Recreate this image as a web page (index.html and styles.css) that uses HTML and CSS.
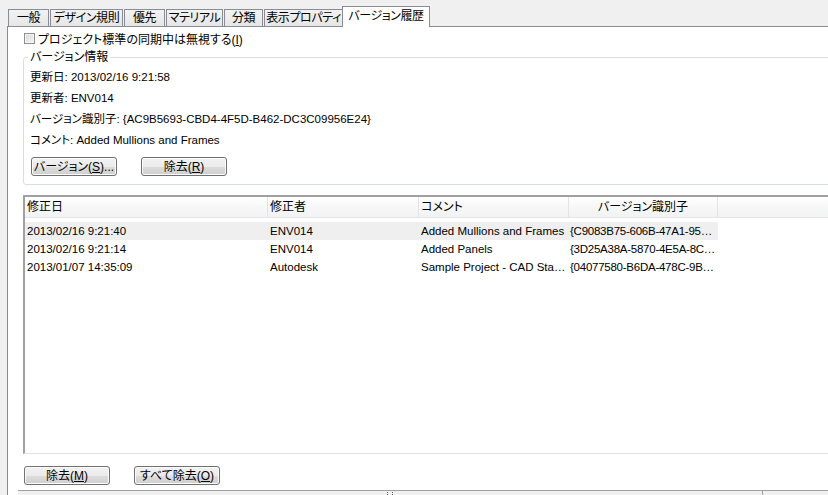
FILE: index.html
```html
<!DOCTYPE html>
<html lang="ja">
<head>
<meta charset="utf-8">
<link rel="stylesheet" href="styles.css">
</head>
<body>
<div class="tabs">
  <div class="tab w1">一般</div>
  <div class="tab w2">デザイン規則</div>
  <div class="tab w3">優先</div>
  <div class="tab w4">マテリアル</div>
  <div class="tab w5">分類</div>
  <div class="tab w6">表示プロパティ</div>
  <div class="tab active">バージョン履歴</div>
</div>
<div class="panel">
  <label class="check-row"><span class="checkbox"></span><span>プロジェクト標準の同期中は無視する(<u>I</u>)</span></label>
  <fieldset class="group">
    <legend>バージョン情報</legend>
    <div class="info">更新日: 2013/02/16 9:21:58</div>
    <div class="info">更新者: ENV014</div>
    <div class="info">バージョン識別子: {AC9B5693-CBD4-4F5D-B462-DC3C09956E24}</div>
    <div class="info">コメント: Added Mullions and Frames</div>
    <div class="btn-row top-btns">
      <button class="btn">バージョン(<u>S</u>)...</button>
      <button class="btn">除去(<u>R</u>)</button>
    </div>
  </fieldset>
  <div class="list">
    <div class="list-head">
      <div class="hcell">修正日</div>
      <div class="hcell">修正者</div>
      <div class="hcell">コメント</div>
      <div class="hcell center">バージョン識別子</div>
      <div class="hcell last"></div>
    </div>
    <div class="list-body">
      <div class="lrow selected">
        <div class="cell">2013/02/16 9:21:40</div>
        <div class="cell">ENV014</div>
        <div class="cell">Added Mullions and Frames</div>
        <div class="cell id">{C9083B75-606B-47A1-95…</div>
      </div>
      <div class="lrow">
        <div class="cell">2013/02/16 9:21:14</div>
        <div class="cell">ENV014</div>
        <div class="cell">Added Panels</div>
        <div class="cell id">{3D25A38A-5870-4E5A-8C…</div>
      </div>
      <div class="lrow">
        <div class="cell">2013/01/07 14:35:09</div>
        <div class="cell">Autodesk</div>
        <div class="cell">Sample Project - CAD Sta…</div>
        <div class="cell id">{04077580-B6DA-478C-9B…</div>
      </div>
    </div>
  </div>
  <div class="btn-row bottom-btns">
    <button class="btn">除去(<u>M</u>)</button>
    <button class="btn">すべて除去(<u>O</u>)</button>
  </div>
  <div class="strip">
    <div class="strip-main"><span class="grip"></span></div>
    <div class="strip-end"></div>
  </div>
</div>
</body>
</html>
```
FILE: styles.css
```css
html, body {
  margin: 0;
  padding: 0;
  height: 100%;
}
body {
  background: #f0f0f0;
  font-family: "Liberation Sans", "Noto Sans CJK JP", sans-serif;
  font-size: 11.5px;
  font-feature-settings: "palt";
  color: #000;
  overflow: hidden;
  display: flex;
  flex-direction: column;
}
u { text-decoration: underline; text-underline-offset: 1px; }

.tabs {
  display: flex;
  align-items: flex-end;
  height: 26px;
  padding-left: 8px;
  box-sizing: border-box;
}
.tab {
  height: 17px;
  line-height: 17px;
  box-sizing: border-box;
  border: 1px solid #898c95;
  border-bottom: none;
  background: linear-gradient(#f2f2f2, #e6e6e6);
  text-align: center;
  margin-right: 1px;
  white-space: nowrap;
  font-size: 12px;
  letter-spacing: -0.4px;
}
.w1 { width: 41px; }
.w2 { width: 73px; }
.w3 { width: 41px; }
.w4 { width: 57px; }
.w5 { width: 39px; }
.w6 { width: 79px; }
.tab.active {
  width: 88px;
  height: 21px;
  line-height: 19px;
  margin-left: -2px;
  margin-bottom: -1px;
  background: #fff;
  position: relative;
  z-index: 1;
}

.panel {
  flex: 1;
  margin-left: 7px;
  background: #fff;
  border-left: 1px solid #898c95;
  border-top: 1px solid #898c95;
  padding-left: 15px;
  display: flex;
  flex-direction: column;
  overflow: hidden;
}

.check-row {
  display: flex;
  align-items: center;
  height: 13px;
  margin-top: 5px;
  margin-left: 1px;
  gap: 3px;
  font-size: 12px;
}
.checkbox {
  width: 11px;
  height: 11px;
  border: 1px solid #8f8f8f;
  box-sizing: border-box;
  background: linear-gradient(135deg, #d9d9d9, #f4f4f4);
  box-shadow: inset 0 0 0 1px #f4f4f4;
}

.group {
  margin: 5px -10px 0 0;
  padding: 3px 0 8px 6px;
  border: 1px solid #d5dfe5;
  border-radius: 3px;
  min-width: 0;
}
.group legend {
  padding: 0 2px;
  margin-left: -2px;
  line-height: 14px;
  font-size: 12px;
}
.info {
  height: 21px;
  line-height: 21px;
  white-space: nowrap;
}
.btn-row {
  display: flex;
  gap: 24px;
}
.top-btns {
  margin-top: 6px;
  margin-left: 1px;
}
.btn {
  width: 86px;
  height: 19px;
  padding: 0;
  font: inherit;
  font-size: 12px;
  color: #000;
  border: 1px solid #707070;
  border-radius: 3px;
  background: linear-gradient(#f2f2f2 0%, #ebebeb 50%, #dddddd 51%, #cfcfcf 100%);
  box-shadow: inset 0 0 0 1px #fcfcfc;
  text-align: center;
  line-height: 16px;
}

.list {
  margin-top: 10px;
  margin-right: -10px;
  height: 259px;
  box-sizing: border-box;
  border-top: 2px solid #a0a0a0;
  border-left: 2px solid #a0a0a0;
  border-bottom: 1px solid #e3e3e3;
  background: #fff;
}
.list-head {
  display: grid;
  grid-template-columns: 243px 151px 150px 149px 1fr;
  height: 21px;
  background: linear-gradient(#ffffff 0%, #f7f7f7 50%, #f1f2f3 100%);
  border-bottom: 1px solid #e5e5e5;
  box-sizing: border-box;
  font-size: 12px;
}
.hcell {
  line-height: 20px;
  padding-left: 2px;
  border-right: 1px solid #e2e3e4;
  white-space: nowrap;
}
.hcell.center { text-align: center; padding-left: 0; }
.hcell.last { border-right: none; }
.list-body {
  padding-top: 4px;
}
.lrow {
  display: grid;
  grid-template-columns: 243px 151px 150px 149px;
  width: 693px;
  height: 18px;
  line-height: 18px;
}
.lrow.selected { background: #efefef; }
.cell {
  padding-left: 2px;
  padding-right: 1px;
  white-space: nowrap;
  overflow: hidden;
}
.cell.id {
  letter-spacing: -0.25px;
  padding-left: 1px;
  padding-right: 0;
}

.bottom-btns {
  margin-top: 12px;
  margin-left: 1px;
}

.strip {
  margin-top: 5px;
  margin-left: -5px;
  flex: 1;
  display: flex;
  border-top: 1px solid #a0a0a0;
  background: #f0f0f0;
}
.strip-main {
  width: 744px;
  border-right: 1px solid #a0a0a0;
  position: relative;
}
.grip {
  position: absolute;
  left: 369px;
  top: 1px;
  width: 4px;
  height: 3px;
  border-left: 1px dotted #555;
  border-right: 1px dotted #555;
}
.strip-end { flex: 1; }
```
